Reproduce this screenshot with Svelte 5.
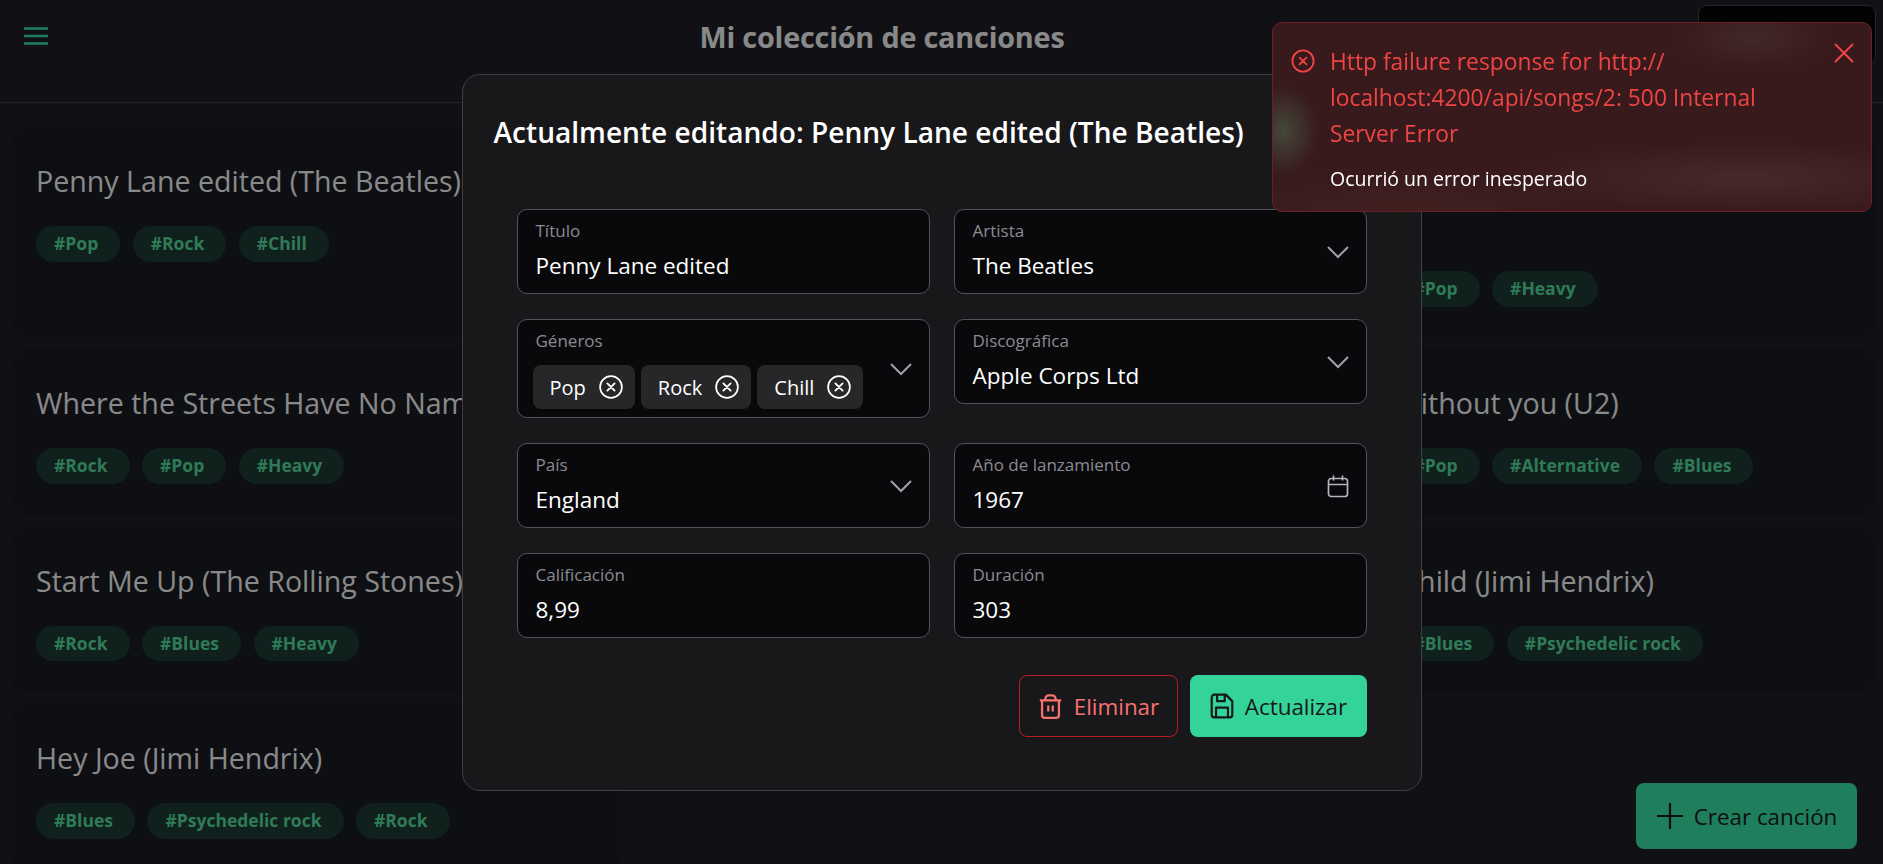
<script>
	const songs = [
		{ title: 'Penny Lane edited (The Beatles)', tags: ['Pop', 'Rock', 'Chill'] },
		{ title: 'Strawberry Fields Forever (The Beatles)', tags: ['Pop', 'Rock'] },
		{ title: 'Sympathy For The Devil Live (The Rolling Stones)', tags: ['Rock', 'Pop', 'Heavy'] },
		{ title: 'Where the Streets Have No Name (U2)', tags: ['Rock', 'Pop', 'Heavy'] },
		{ title: 'Sunday Bloody Sunday (U2)', tags: ['Rock', 'Pop'] },
		{ title: 'With or Without you (U2)', tags: ['Rock', 'Pop', 'Alternative', 'Blues'] },
		{ title: 'Start Me Up (The Rolling Stones)', tags: ['Rock', 'Blues', 'Heavy'] },
		{ title: 'Angie (The Rolling Stones)', tags: ['Rock', 'Blues'] },
		{ title: 'Voodoo Child (Jimi Hendrix)', tags: ['Rock', 'Blues', 'Psychedelic rock'] },
		{ title: 'Hey Joe (Jimi Hendrix)', tags: ['Blues', 'Psychedelic rock', 'Rock'] },
	]

	const fields = [
		{ label: 'Título', value: 'Penny Lane edited' },
		{ label: 'Artista', value: 'The Beatles', icon: 'chevron' },
		{ label: 'Géneros', chips: ['Pop', 'Rock', 'Chill'], icon: 'chevron' },
		{ label: 'Discográfica', value: 'Apple Corps Ltd', icon: 'chevron' },
		{ label: 'País', value: 'England', icon: 'chevron' },
		{ label: 'Año de lanzamiento', value: '1967', icon: 'calendar' },
		{ label: 'Calificación', value: '8,99' },
		{ label: 'Duración', value: '303' },
	]
</script>

<div class="page">
	<header class="topbar">
		<button class="menu" aria-label="Menú">
			<svg viewBox="0 0 24 18" width="24" height="18">
				<path d="M0 1.5H24M0 9H24M0 16.5H24" fill="none" stroke="currentColor" stroke-width="2.4" />
			</svg>
		</button>
		<h1>Mi colección de canciones</h1>
		<button class="account" aria-label="Cuenta"></button>
	</header>

	<main class="songs">
		{#each songs as song}
			<article class="card">
				<h2>{song.title}</h2>
				<ul class="tags">
					{#each song.tags as tag}
						<li>#{tag}</li>
					{/each}
				</ul>
			</article>
		{/each}
	</main>

	<button class="create">
		<svg viewBox="0 0 28 28" width="28" height="28">
			<path d="M14 1V27M1 14H27" fill="none" stroke="currentColor" stroke-width="2.2" />
		</svg>
		Crear canción
	</button>
</div>

<div class="overlay">
	<section class="modal">
		<h2 class="modal-title">Actualmente editando: Penny Lane edited (The Beatles)</h2>

		<form class="form">
			{#each fields as field}
				<div class="field">
					<div class="field-body">
						<span class="label">{field.label}</span>
						{#if field.chips}
							<div class="chips">
								{#each field.chips as chip}
									<span class="chip">
										{chip}
										<svg viewBox="0 0 24 24" width="24" height="24">
											<circle cx="12" cy="12" r="10.9" fill="none" stroke="currentColor" stroke-width="1.7" />
											<path d="M8.4 8.4l7.2 7.2M15.6 8.4l-7.2 7.2" fill="none" stroke="currentColor" stroke-width="1.9" stroke-linecap="round" />
										</svg>
									</span>
								{/each}
							</div>
						{:else}
							<span class="value">{field.value}</span>
						{/if}
					</div>
					{#if field.icon === 'chevron'}
						<svg class="field-icon" viewBox="0 0 24 24" width="24" height="24">
							<path d="M2 7l10 10 10-10" fill="none" stroke="currentColor" stroke-width="2" />
						</svg>
					{:else if field.icon === 'calendar'}
						<svg class="field-icon calendar" viewBox="0 0 24 24" width="24" height="24">
							<rect x="2.5" y="4.5" width="19" height="18" rx="2.8" fill="none" stroke="currentColor" stroke-width="1.7" />
							<path d="M2.5 10.5H21.5M7.5 1.5v5M16.5 1.5v5" fill="none" stroke="currentColor" stroke-width="1.7" />
						</svg>
					{/if}
				</div>
			{/each}
		</form>

		<div class="actions">
			<button class="btn danger">
				<svg viewBox="0 0 24 24" width="27" height="27">
					<path
						d="M2.5 6.5H21.5M4.5 6.5V19.5a2.5 2.5 0 0 0 2.5 2.5h10a2.5 2.5 0 0 0 2.5-2.5V6.5M7.5 6.5V5a3 3 0 0 1 3-3h3a3 3 0 0 1 3 3v1.5M10 11v5.5M14 11v5.5"
						fill="none"
						stroke="currentColor"
						stroke-width="2"
					/>
				</svg>
				Eliminar
			</button>
			<button class="btn primary">
				<svg viewBox="0 0 24 24" width="26" height="26">
					<path
						d="M5 1.5h10.5l6 6V20a2.5 2.5 0 0 1-2.5 2.5H5A2.5 2.5 0 0 1 2.5 20V4A2.5 2.5 0 0 1 5 1.5zM7.5 1.5v6h7v-6M6.5 22.5v-9h11v9"
						fill="none"
						stroke="currentColor"
						stroke-width="2"
						stroke-linejoin="round"
					/>
				</svg>
				Actualizar
			</button>
		</div>
	</section>
</div>

<aside class="toast">
	<svg class="toast-icon" viewBox="0 0 24 24" width="24" height="24">
		<circle cx="12" cy="12" r="10.6" fill="none" stroke="currentColor" stroke-width="1.8" />
		<path d="M8.6 8.6l6.8 6.8M15.4 8.6l-6.8 6.8" fill="none" stroke="currentColor" stroke-width="1.8" stroke-linecap="round" />
	</svg>
	<div class="toast-body">
		<p class="toast-title">Http failure response for http://<wbr />localhost:4200/api/songs/2: 500 Internal Server Error</p>
		<p class="toast-text">Ocurrió un error inesperado</p>
	</div>
	<button class="toast-close" aria-label="Cerrar">
		<svg viewBox="0 0 20 20" width="20" height="20">
			<path d="M1 1L19 19M19 1L1 19" fill="none" stroke="currentColor" stroke-width="2" />
		</svg>
	</button>
</aside>

<style>
	:global(body) {
		margin: 0;
		background: #1c1c24;
		font-family: 'Open Sans', 'Noto Sans', sans-serif;
		overflow: hidden;
	}

	button {
		font: inherit;
		border: 0;
		background: none;
		padding: 0;
	}

	.page {
		height: 864px;
		overflow: hidden;
	}

	.topbar {
		height: 103px;
		box-sizing: border-box;
		border-bottom: 1px solid #3a3a42;
		display: flex;
		align-items: flex-start;
		justify-content: center;
		position: relative;
	}

	.menu {
		position: absolute;
		left: 24px;
		top: 27px;
		color: #34d399;
		line-height: 0;
	}

	.topbar h1 {
		margin: 17px 119px 0 0;
		font-size: 28.8px;
		line-height: 40px;
		font-weight: 700;
		color: #e4e4e7;
		letter-spacing: -0.2px;
	}

	.account {
		position: absolute;
		right: 7px;
		top: 5px;
		width: 178px;
		height: 59px;
		border-radius: 8px;
		background: #060607;
		border: 1px solid #3f3f46;
	}

	.songs {
		display: grid;
		grid-template-columns: repeat(3, 1fr);
		grid-template-rows: 212px;
		column-gap: 15px;
		row-gap: 10px;
		padding: 23px 8px 0 10px;
	}

	.card {
		background: #17191e;
		border-radius: 20px;
		padding: 32px 26px 32px;
	}

	.card h2 {
		margin: 0;
		font-size: 28.6px;
		line-height: 45px;
		font-weight: 400;
		color: #e4e4e7;
	}

	.tags {
		list-style: none;
		margin: 23px 0 0;
		padding: 0;
		display: flex;
		gap: 12.5px;
	}

	.tags li {
		height: 35.5px;
		line-height: 35.5px;
		padding: 0 22px 0 18px;
		border-radius: 18px;
		background: #1c3630;
		color: #4fcb91;
		font-size: 17.5px;
		font-weight: 700;
	}

	.create {
		position: absolute;
		right: 26px;
		bottom: 15px;
		width: 221px;
		height: 66px;
		border-radius: 8px;
		background: #34d399;
		color: #18181b;
		font-size: 22.4px;
		display: flex;
		align-items: center;
		justify-content: center;
		gap: 10px;
	}

	.overlay {
		position: fixed;
		inset: 0;
		background: rgba(0, 0, 0, 0.4);
		display: flex;
		align-items: center;
		justify-content: center;
	}

	.modal {
		width: 960px;
		height: 717px;
		box-sizing: border-box;
		margin-top: 1px;
		background: #18181b;
		border: 1px solid #3f3f46;
		border-radius: 18px;
		padding: 36px 54px 0 31px;
	}

	.modal-title {
		margin: 0;
		font-size: 28.1px;
		line-height: 42px;
		font-weight: 600;
		color: #fff;
		white-space: nowrap;
	}

	.form {
		margin: 56px 0 0 23px;
		display: grid;
		grid-template-columns: 1fr 1fr;
		gap: 25px 24px;
		align-items: start;
	}

	.field {
		min-height: 85px;
		box-sizing: border-box;
		background: #09090b;
		border: 1px solid #52525b;
		border-radius: 10px;
		padding: 9px 16px 8px 18px;
		display: flex;
		align-items: center;
		gap: 8px;
	}

	.field-body {
		flex: 1;
		min-width: 0;
		align-self: flex-start;
	}

	.label {
		display: block;
		font-size: 17px;
		line-height: 24px;
		color: #8b8b92;
	}

	.value {
		display: block;
		margin-top: 7px;
		font-size: 22.5px;
		line-height: 32px;
		color: #fff;
	}

	.chips {
		display: flex;
		gap: 6px;
		margin: 12px 0 0 -3px;
	}

	.chip {
		height: 44px;
		padding: 0 12px 0 17px;
		display: flex;
		align-items: center;
		gap: 13px;
		border-radius: 8px;
		background: #27272a;
		color: #fff;
		font-size: 20px;
	}

	.field-icon {
		color: #a1a1aa;
		flex: none;
	}

	.field-icon.calendar {
		color: #b4b4ba;
	}

	.actions {
		display: flex;
		justify-content: flex-end;
		gap: 12px;
		margin-top: 37px;
	}

	.btn {
		height: 62px;
		box-sizing: border-box;
		border-radius: 8px;
		display: flex;
		align-items: center;
		justify-content: center;
		gap: 10px;
		font-size: 22.4px;
	}

	.danger {
		width: 159px;
		border: 1px solid #b91c1c;
		color: #f87171;
	}

	.primary {
		width: 177px;
		background: #34d399;
		color: #18181b;
	}

	/* blobs stand in for the blurred page showing through the toast */
	.toast {
		position: fixed;
		top: 22px;
		right: 11px;
		width: 600px;
		height: 190px;
		box-sizing: border-box;
		padding: 26px 18px 0 18px;
		display: flex;
		gap: 15px;
		border: 1px solid #6e1f22;
		border-radius: 10px;
		background:
			radial-gradient(ellipse 36px 46px at 10px 108px, #44483a 0%, rgba(68, 72, 58, 0) 100%),
			radial-gradient(ellipse 80px 34px at 480px 15px, #42282a 0%, rgba(66, 40, 42, 0) 100%),
			radial-gradient(ellipse 230px 36px at 470px 155px, #47292b 0%, rgba(71, 41, 43, 0) 100%),
			radial-gradient(ellipse 260px 40px at 130px 185px, #40201f 0%, rgba(64, 32, 31, 0) 100%),
			#38191c;
	}

	.toast-icon {
		flex: none;
		color: #ef4444;
	}

	.toast-body {
		width: 440px;
	}

	.toast-title {
		margin: -5px 0 0;
		font-size: 22.8px;
		line-height: 36px;
		color: #ef4444;
	}

	.toast-text {
		margin: 14px 0 0;
		font-size: 19.5px;
		line-height: 26px;
		color: #fff;
	}

	.toast-close {
		position: absolute;
		top: 20px;
		right: 17px;
		color: #ef4444;
		line-height: 0;
	}
</style>
